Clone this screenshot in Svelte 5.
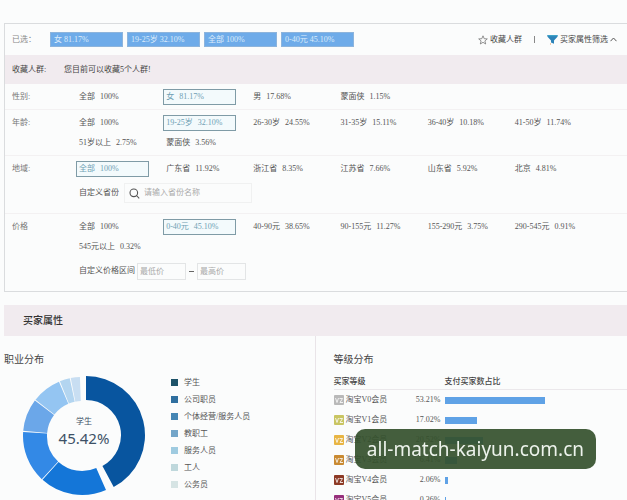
<script lang="ts">
	interface Option {
		name: string;
		value: string;
	}

	interface Filter {
		id: string;
		label: string;
		options: Option[];
		selected: number;
	}

	interface Slice {
		name: string;
		from: number;
		to: number;
		color: string;
		dot: string;
	}

	let filters = $state<Filter[]>([
		{
			id: 'gender',
			label: '性别:',
			selected: 1,
			options: [
				{ name: '全部', value: '100%' },
				{ name: '女', value: '81.17%' },
				{ name: '男', value: '17.68%' },
				{ name: '蒙面侠', value: '1.15%' }
			]
		},
		{
			id: 'age',
			label: '年龄:',
			selected: 1,
			options: [
				{ name: '全部', value: '100%' },
				{ name: '19-25岁', value: '32.10%' },
				{ name: '26-30岁', value: '24.55%' },
				{ name: '31-35岁', value: '15.11%' },
				{ name: '36-40岁', value: '10.18%' },
				{ name: '41-50岁', value: '11.74%' },
				{ name: '51岁以上', value: '2.75%' },
				{ name: '蒙面侠', value: '3.56%' }
			]
		},
		{
			id: 'region',
			label: '地域:',
			selected: 0,
			options: [
				{ name: '全部', value: '100%' },
				{ name: '广东省', value: '11.92%' },
				{ name: '浙江省', value: '8.35%' },
				{ name: '江苏省', value: '7.66%' },
				{ name: '山东省', value: '5.92%' },
				{ name: '北京', value: '4.81%' }
			]
		},
		{
			id: 'price',
			label: '价格',
			selected: 1,
			options: [
				{ name: '全部', value: '100%' },
				{ name: '0-40元', value: '45.10%' },
				{ name: '40-90元', value: '38.65%' },
				{ name: '90-155元', value: '11.27%' },
				{ name: '155-290元', value: '3.75%' },
				{ name: '290-545元', value: '0.91%' },
				{ name: '545元以上', value: '0.32%' }
			]
		}
	]);

	let chosen = $derived(filters.map((f) => f.options[f.selected]));

	// angles are degrees clockwise from the top
	const slices: Slice[] = [
		{ name: '学生', from: 0, to: 152, color: '#08559f', dot: '#1d5268' },
		{ name: '公司职员', from: 156, to: 222, color: '#1476d8', dot: '#2f6f9f' },
		{ name: '个体经营/服务人员', from: 223, to: 274, color: '#3389e6', dot: '#4586b4' },
		{ name: '教职工', from: 275, to: 307, color: '#6ba7e9', dot: '#73a5c8' },
		{ name: '服务人员', from: 308, to: 337, color: '#94c5f2', dot: '#9fcbe0' },
		{ name: '工人', from: 338, to: 348, color: '#b3d5f0', dot: '#bfd8dc' },
		{ name: '公务员', from: 349, to: 358, color: '#c8def2', dot: '#d6e4e4' }
	];

	const levels = [
		{ mark: 'V0', value: 53.21, color: '#b9b9b9' },
		{ mark: 'V1', value: 17.02, color: '#c9c562' },
		{ mark: 'V2', value: 20.52, color: '#e8b544' },
		{ mark: 'V3', value: 6.41, color: '#c98a32' },
		{ mark: 'V4', value: 2.06, color: '#8d3a25' },
		{ mark: 'V5', value: 0.36, color: '#97307c' }
	];

	const maxLevel = Math.max(...levels.map((l) => l.value));

	function point(cx: number, cy: number, r: number, deg: number) {
		const a = (deg * Math.PI) / 180;
		return `${(cx + r * Math.sin(a)).toFixed(2)} ${(cy - r * Math.cos(a)).toFixed(2)}`;
	}

	function arc(slice: Slice, index: number) {
		// the leading slice is pulled out of the ring
		const cx = index === 0 ? 64 : 60;
		const cy = index === 0 ? 59 : 60;
		const outer = 59;
		const inner = 35;
		return [
			`M${point(cx, cy, outer, slice.from)}`,
			`A${outer} ${outer} 0 0 1 ${point(cx, cy, outer, slice.to)}`,
			`L${point(cx, cy, inner, slice.to)}`,
			`A${inner} ${inner} 0 0 0 ${point(cx, cy, inner, slice.from)}Z`
		].join(' ');
	}
</script>

<div class="page">
	<section class="panel">
		<div class="bar">
			<span class="bar-label">已选：</span>
			<div class="chips">
				{#each chosen as item}
					<button class="chip">{item.name} {item.value}</button>
				{/each}
			</div>
			<div class="bar-actions">
				<button class="link">
					<svg width="10" height="10" viewBox="0 0 10 10" fill="none" stroke="#777" stroke-width="0.8">
						<path d="M5 .8 6.2 3.7 9.3 3.9 6.9 5.9 7.7 9 5 7.3 2.3 9 3.1 5.9.7 3.9 3.8 3.7Z" />
					</svg>
					收藏人群
				</button>
				<span class="divider"></span>
				<button class="link">
					<svg width="11" height="11" viewBox="0 0 11 11">
						<path d="M.5 1h10v1.8L7 6.4V9.8L4 8.4V6.4L.5 2.8Z" fill="#2c83b8" />
						<path d="M.5 1h10v1.2H.5Z" fill="#3fa3c8" />
						<path d="M3 10h1" stroke="#e3a060" />
					</svg>
					买家属性筛选
					<svg width="7" height="5" viewBox="0 0 7 5" fill="none" stroke="#555">
						<path d="M.5 4.2 3.5 1l3 3.2" />
					</svg>
				</button>
			</div>
		</div>

		<div class="notice">
			<span class="notice-label">收藏人群:</span>
			<span>您目前可以收藏5个人群!</span>
		</div>

		{#each filters as filter}
			<div class="row">
				<span class="row-label">{filter.label}</span>
				<div class="row-body">
					<div class="options">
						{#each filter.options as option, i}
							<button
								class="option"
								class:active={filter.selected === i}
								onclick={() => (filter.selected = i)}
							>
								<span>{option.name}</span>
								<span>{option.value}</span>
							</button>
						{/each}
					</div>

					{#if filter.id === 'region'}
						<div class="custom">
							<label for="province">自定义省份</label>
							<div class="search">
								<svg width="11" height="11" viewBox="0 0 11 11" fill="none" stroke="#555" stroke-width="1.1">
									<circle cx="4.8" cy="4.8" r="3.8" />
									<path d="M7.5 7.5 10.2 10.4" />
								</svg>
								<input id="province" type="text" placeholder="请输入省份名称" />
							</div>
						</div>
					{:else if filter.id === 'price'}
						<div class="custom">
							<label for="price-min">自定义价格区间</label>
							<div class="range">
								<input id="price-min" type="text" placeholder="最低价" />
								<span class="dash"></span>
								<input type="text" placeholder="最高价" aria-label="最高价" />
							</div>
						</div>
					{/if}
				</div>
			</div>
		{/each}
	</section>

	<h2>买家属性</h2>

	<div class="charts">
		<section class="jobs">
			<h3>职业分布</h3>
			<div class="jobs-body">
				<div class="donut">
					<svg width="124" height="120" viewBox="0 0 124 120">
						{#each slices as slice, i}
							<path d={arc(slice, i)} fill={slice.color} />
						{/each}
					</svg>
					<div class="donut-text">
						<span>学生</span>
						<strong>45.42%</strong>
					</div>
				</div>
				<ul class="legend">
					{#each slices as slice}
						<li><i style="background: {slice.dot}"></i>{slice.name}</li>
					{/each}
				</ul>
			</div>
		</section>

		<section class="levels">
			<h3>等级分布</h3>
			<table>
				<thead>
					<tr>
						<th class="col-name">买家等级</th>
						<th class="col-value"></th>
						<th>支付买家数占比</th>
					</tr>
				</thead>
				<tbody>
					{#each levels as level}
						<tr>
							<td>
								<div class="level">
									<svg width="10" height="10" viewBox="0 0 10 10">
										<rect width="10" height="10" rx="1" fill={level.color} />
										<path d="M1.5 3 3 7.5 4.5 3M5.5 3.5h3L6 7.5h3" fill="none" stroke="#fff" stroke-opacity="0.8" />
									</svg>
									淘宝{level.mark}会员
								</div>
							</td>
							<td class="value">{level.value.toFixed(2)}%</td>
							<td><div class="meter" style="width: {(level.value / maxLevel) * 55}%"></div></td>
						</tr>
					{/each}
				</tbody>
			</table>
		</section>
	</div>

	<div class="watermark">all-match-kaiyun.com.cn</div>
</div>

<style>
	:global(body) {
		margin: 0;
		background: #fbfcfc;
	}

	.page {
		box-sizing: border-box;
		height: 100vh;
		overflow: hidden;
		padding: 23px 0 0 4px;
		font-family: 'Liberation Serif', 'Noto Sans CJK SC', serif;
		font-size: 8px;
		line-height: 12px;
		color: #555;
	}

	button,
	input {
		box-sizing: border-box;
		margin: 0;
		padding: 0;
		border: none;
		background: none;
		font: inherit;
		color: inherit;
	}

	button {
		cursor: pointer;
		white-space: nowrap;
	}

	.panel {
		border: 1px solid #dadcde;
		border-right: none;
	}

	.bar {
		display: flex;
		align-items: center;
		height: 31px;
		padding: 0 10px 0 7px;
	}

	.bar-label {
		width: 38px;
		color: #888;
	}

	.chips {
		display: flex;
		gap: 4px;
	}

	.chip {
		width: 73px;
		height: 15px;
		padding: 0 3px;
		border: 1px solid #8db4dc;
		background: #6eabe9;
		color: #dcecfb;
		text-align: left;
		line-height: 13px;
	}

	.bar-actions {
		display: flex;
		align-items: center;
		gap: 12px;
		margin-left: auto;
		color: #444;
	}

	.link {
		display: flex;
		align-items: center;
		gap: 2px;
	}

	.divider {
		width: 1px;
		height: 7px;
		background: #888;
	}

	.notice {
		display: flex;
		align-items: center;
		height: 29px;
		padding-left: 7px;
		background: #f1ebef;
		color: #444;
	}

	.notice-label {
		width: 52px;
	}

	.row {
		display: flex;
		padding: 5px 42px 4px 7px;
		border-top: 1px solid #f3f1f2;
	}

	.notice + .row {
		border-top: none;
	}

	.row-label {
		flex: none;
		width: 64px;
		line-height: 16px;
		color: #777;
	}

	.row-body {
		flex: 1;
	}

	.options {
		display: grid;
		grid-template-columns: repeat(6, 1fr);
		gap: 4px 14px;
	}

	.option {
		display: flex;
		align-items: center;
		gap: 5px;
		min-width: 0;
		height: 16px;
		padding: 0 2px;
		border: 1px solid transparent;
	}

	.option.active {
		border-color: #7f9ba6;
		background: #f3fafc;
		color: #6f9fb4;
	}

	.custom {
		display: flex;
		align-items: center;
		height: 20px;
		margin: 6px 0;
		padding-left: 3px;
	}

	.search {
		display: flex;
		align-items: center;
		gap: 4px;
		box-sizing: border-box;
		width: 128px;
		height: 20px;
		margin-left: 5px;
		padding-left: 4px;
		border: 1px solid #f0f1f1;
	}

	.search input {
		flex: 1;
		min-width: 0;
	}

	input::placeholder {
		color: #aaa;
		opacity: 1;
	}

	.range {
		display: flex;
		align-items: center;
		gap: 3px;
		margin-left: 2px;
	}

	.range input {
		width: 49px;
		height: 17px;
		padding: 0 2px;
		border: 1px solid #e3e5e6;
	}

	.dash {
		width: 5px;
		height: 1px;
		background: #666;
	}

	h2,
	h3 {
		margin: 0;
		font-size: 10px;
	}

	h2 {
		margin-top: 13px;
		padding-left: 19px;
		background: #f1ebef;
		color: #333;
		font-weight: 500;
		line-height: 31px;
	}

	h3 {
		font-weight: 400;
		line-height: 16px;
		color: #444;
	}

	.charts {
		display: flex;
	}

	.jobs,
	.levels {
		box-sizing: border-box;
		padding-top: 16px;
	}

	.jobs {
		width: 50%;
		border-right: 1px solid #e9e4e8;
	}

	.levels {
		flex: 1;
		padding-left: 18px;
	}

	.jobs-body {
		display: flex;
		align-items: flex-start;
		gap: 25px;
		padding: 6px 0 0 18px;
	}

	.donut {
		display: grid;
		margin-top: 2px;
	}

	.donut > * {
		grid-area: 1 / 1;
	}

	.donut-text {
		display: flex;
		flex-direction: column;
		align-items: center;
		justify-content: center;
		padding-bottom: 8px;
		color: #3d5166;
	}

	.donut-text strong {
		font-family: 'Noto Sans', sans-serif;
		font-size: 15px;
		font-weight: 400;
		line-height: 20px;
	}

	.legend {
		margin: 0;
		padding: 0;
		list-style: none;
	}

	.legend li {
		display: flex;
		align-items: center;
		gap: 6px;
		height: 17px;
	}

	.legend i {
		width: 7px;
		height: 7px;
	}

	table {
		width: 100%;
		margin-top: 6px;
		border-collapse: collapse;
		table-layout: fixed;
	}

	th,
	td {
		padding: 0;
		text-align: left;
	}

	th {
		height: 15px;
		border-bottom: 1px solid #ebe8eb;
		font-weight: 500;
		color: #444;
	}

	td {
		height: 20px;
	}

	.col-name {
		width: 60px;
	}

	.col-value {
		width: 51px;
	}

	.level {
		display: flex;
		align-items: center;
		gap: 2px;
	}

	.value {
		padding-right: 4px;
		text-align: right;
	}

	.meter {
		height: 7px;
		background: #5fa2e6;
	}

	.watermark {
		position: fixed;
		right: 31px;
		bottom: 31px;
		padding: 0 12px;
		border-radius: 10px;
		background: rgba(52, 80, 44, 0.92);
		color: #edf3ec;
		font-family: 'Noto Sans', sans-serif;
		font-size: 19px;
		line-height: 40px;
	}
</style>
